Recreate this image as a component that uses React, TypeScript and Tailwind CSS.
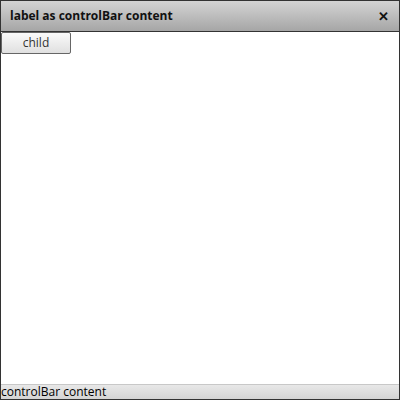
export default function App() {
  return (
    <div className="w-[400px] h-[400px] flex flex-col border border-[#333] bg-white" style={{ fontFamily: '"Open Sans", sans-serif' }}>
      <div className="h-[31px] shrink-0 flex items-center justify-between pl-[9px] pr-[10px] bg-gradient-to-b from-[#d4d4d4] to-[#a6a6a6] border-b border-[#333]">
        <span className="text-[12px] font-bold text-[#111]">label as controlBar content</span>
        <span className="text-[13px] font-bold text-[#111] leading-none">✕</span>
      </div>
      <div className="flex-1 flex flex-col items-start">
        <button className="w-[70px] h-[22px] border border-[#666] rounded-[2px] bg-gradient-to-b from-[#fafafa] to-[#e0e0e0] text-[12px] text-[#333] leading-none">child</button>
      </div>
      <div className="h-[15px] shrink-0 flex items-center border-t border-[#c8c8c8] bg-gradient-to-b from-[#e8e8e8] to-[#d4d4d4]">
        <span className="text-[12px] text-black leading-none">controlBar content</span>
      </div>
    </div>
  );
}
